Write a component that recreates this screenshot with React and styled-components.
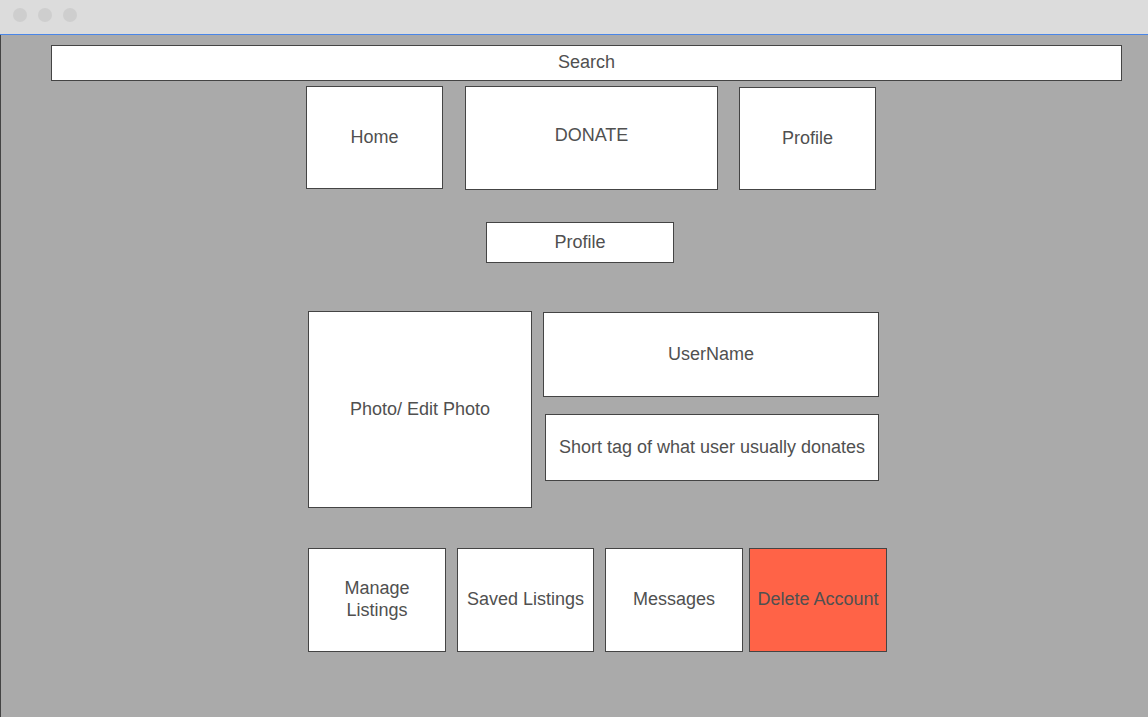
import React from "react";
import styled, { createGlobalStyle } from "styled-components";

const GlobalStyle = createGlobalStyle`
  html, body {
    margin: 0;
    padding: 0;
    background: #aaaaaa;
  }
  body {
    font-family: "Liberation Sans", Arial, sans-serif;
  }
`;

const Window = styled.div`
  width: 1148px;
  height: 717px;
  display: flex;
  flex-direction: column;
  overflow: hidden;
`;

const TitleBar = styled.div`
  height: 35px;
  flex-shrink: 0;
  box-sizing: border-box;
  background: #dcdcdc;
  border-bottom: 1px solid #4a86e8;
  display: flex;
  align-items: center;
  gap: 11px;
  padding: 0 0 4px 13px;
`;

const Dot = styled.span`
  width: 14px;
  height: 14px;
  border-radius: 50%;
  background: #cecece;
`;

const Canvas = styled.div`
  flex: 1;
  background: #aaaaaa;
  border-left: 1px solid #444;
  display: flex;
  flex-direction: column;
`;

const Row = styled.div`
  display: flex;
  align-items: flex-start;
  margin-top: ${({ $top }) => $top}px;
`;

const Column = styled.div`
  display: flex;
  flex-direction: column;
  align-items: flex-start;
  margin-left: ${({ $x = 0 }) => $x}px;
  margin-top: ${({ $y = 0 }) => $y}px;
`;

const Box = styled.div`
  box-sizing: border-box;
  width: ${({ $w }) => $w}px;
  height: ${({ $h }) => $h}px;
  margin-left: ${({ $x = 0 }) => $x}px;
  margin-top: ${({ $y = 0 }) => $y}px;
  background: ${({ $danger }) => ($danger ? "#ff6347" : "#ffffff")};
  border: 1px solid #444444;
  display: flex;
  align-items: center;
  justify-content: center;
  text-align: center;
  color: #505050;
  font-size: 18px;
  line-height: 22px;
  padding-bottom: ${({ $lift = 2 }) => $lift}px;
  flex-shrink: 0;
`;

export default function App() {
  return (
    <>
      <GlobalStyle />
      <Window>
        <TitleBar>
          <Dot />
          <Dot />
          <Dot />
        </TitleBar>
        <Canvas>
          <Row $top={10}>
            <Box $x={50} $w={1071} $h={36}>Search</Box>
          </Row>

          <Row $top={5}>
            <Box $x={305} $w={137} $h={103}>Home</Box>
            <Box $x={22} $w={253} $h={104} $lift={6}>DONATE</Box>
            <Box $x={21} $y={1} $w={137} $h={103}>Profile</Box>
          </Row>

          <Row $top={32}>
            <Box $x={485} $w={188} $h={41}>Profile</Box>
          </Row>

          <Row $top={48}>
            <Box $x={307} $w={224} $h={197}>Photo/ Edit Photo</Box>
            <Column $x={11} $y={1}>
              <Box $w={336} $h={85}>UserName</Box>
              <Box $x={2} $y={17} $w={334} $h={67}>
                Short tag of what user usually donates
              </Box>
            </Column>
          </Row>

          <Row $top={40}>
            <Box $x={307} $w={138} $h={104}>
              Manage
              <br />
              Listings
            </Box>
            <Box $x={11} $w={137} $h={104}>Saved Listings</Box>
            <Box $x={11} $w={138} $h={104}>Messages</Box>
            <Box $x={6} $w={138} $h={104} $danger>
              Delete Account
            </Box>
          </Row>
        </Canvas>
      </Window>
    </>
  );
}
